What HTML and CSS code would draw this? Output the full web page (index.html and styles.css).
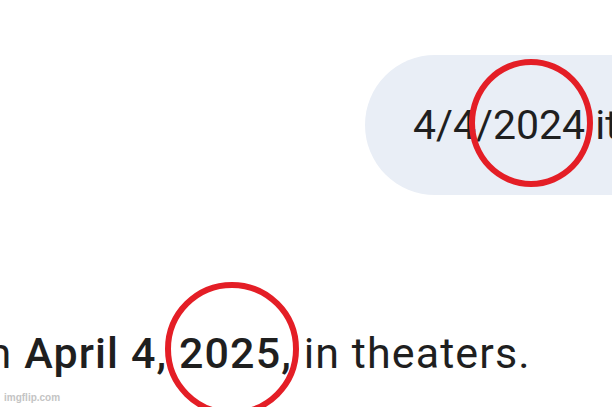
FILE: index.html
```html
<!DOCTYPE html>
<html lang="en">
<head>
    <meta charset="UTF-8">
    <meta name="viewport" content="width=device-width, initial-scale=1.0">
    <title>Release date - imgflip</title>
    <link rel="stylesheet" href="styles.css">
</head>
<body>
    <div class="meme">
        <div class="user-row">
            <div class="bubble">4/4/2024 it comes out</div>
        </div>

        <p class="answer">on <b>April 4, 2025,</b> in theaters.</p>

        <span class="mark mark-top"></span>
        <span class="mark mark-bottom"></span>

        <div class="watermark">imgflip.com</div>
    </div>
</body>
</html>
```

FILE: styles.css
```css
body {
    margin: 0;
    padding: 0;
    background: #fff;
    font-family: Roboto, "Liberation Sans", Arial, sans-serif;
    color: #1f1f1f;
}

.meme {
    position: relative;
    width: 612px;
    height: 407px;
    overflow: hidden;
}

.user-row {
    padding-top: 55px;
    padding-left: 365px;
}

.bubble {
    display: flex;
    align-items: center;
    height: 140px;
    width: 400px;
    padding-left: 48px;
    box-sizing: border-box;
    border-radius: 70px;
    background: #e9eef6;
    font-size: 41px;
    white-space: nowrap;
}

.answer {
    margin: 0;
    padding-top: 133px;
    margin-left: -38px;
    font-size: 43px;
    line-height: 50px;
    letter-spacing: 1.1px;
    white-space: nowrap;
}

.answer b {
    font-weight: 500;
}

/* red annotation circles */
.mark {
    position: absolute;
    border: 6px solid #e41e26;
    border-radius: 50%;
    box-sizing: border-box;
}

.mark-top {
    left: 469px;
    top: 59px;
    width: 124px;
    height: 128px;
}

.mark-bottom {
    left: 165px;
    top: 282px;
    width: 134px;
    height: 134px;
}

.watermark {
    position: absolute;
    left: 4px;
    bottom: 4px;
    font-family: "Liberation Sans", Arial, sans-serif;
    font-size: 10px;
    font-weight: bold;
    color: #c4c4c4;
}
```
